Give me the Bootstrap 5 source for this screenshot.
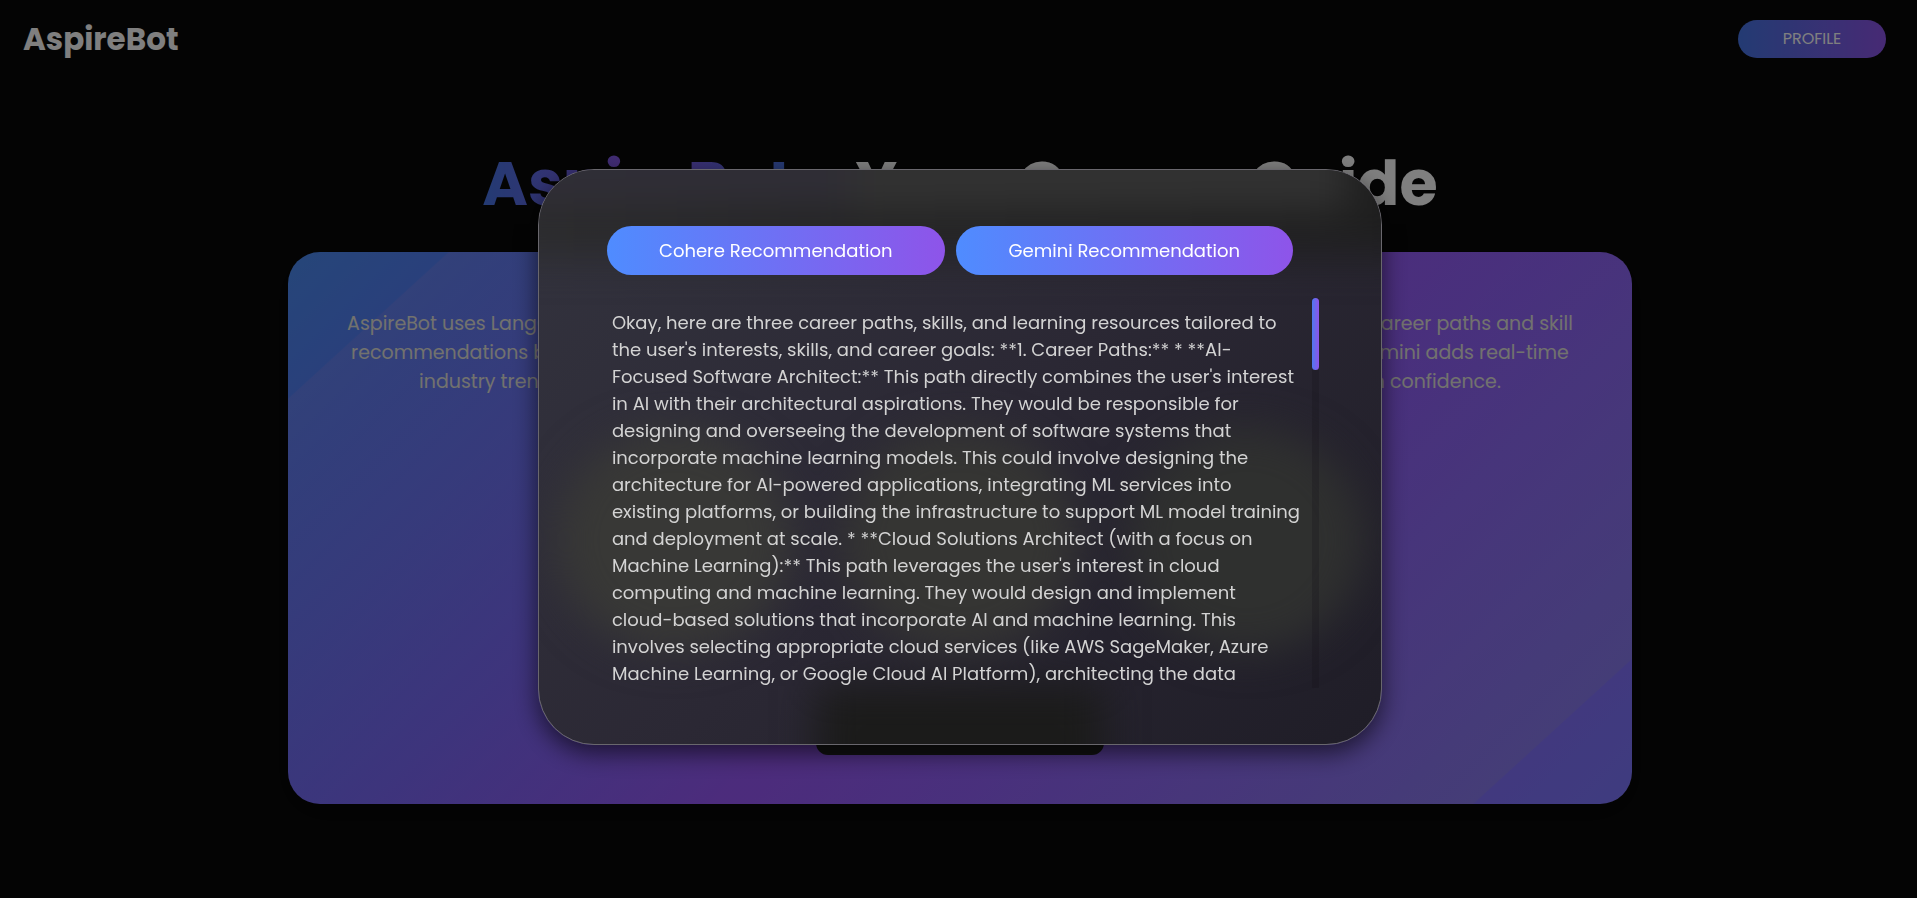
<!DOCTYPE html>
<html lang="en">
<head>
<meta charset="utf-8">
<meta name="viewport" content="width=device-width, initial-scale=1">
<title>AspireBot</title>
<link href="https://cdn.jsdelivr.net/npm/bootstrap@5.3.0/dist/css/bootstrap.min.css" rel="stylesheet">
<style>
  body { background: #090909; color: #fff; font-family: Poppins, Inter, sans-serif; min-height: 100vh; overflow: hidden; }
  .brand { font-size: 31px; line-height: 40px; font-weight: 700; color: #fff; }
  .pill { border: 0; border-radius: 30px; color: #fff; background: linear-gradient(90deg, #4776e6, #8e54e9); }
  .pill-profile { width: 148px; height: 38px; font-size: 16px; }
  .topbar { height: 77px; padding: 0 31px 0 23px; }
  .page-main { padding-left: 3px; }
  .hero-title { margin: 60px 0 22px; font-size: 62px; line-height: 93px; font-weight: 700; }
  .hero-title span { color: transparent; background: linear-gradient(90deg, #4776e6, #8e54e9 50%, #4776e6); -webkit-background-clip: text; background-clip: text; }
  .hero { width: calc(70% + 4px); height: 552px; border-radius: 32px; padding: 57px 59px 49px; box-shadow: 0 8px 32px rgba(0,0,0,.4);
    background:
      linear-gradient(137.6deg, transparent 8.2%, rgba(190,140,220,.16) 8.3%, rgba(180,150,160,.03) 35%, rgba(180,150,160,.03) 65%, rgba(190,180,130,.12) 91.8%, transparent 91.9%),
      linear-gradient(135deg, #4c8cf2 0%, #567bfa 12%, #9856fc 52%, #7e78fe 100%); }
  .hero-copy { font-size: 19px; line-height: 29px; color: #e4e4dc; }
  .hero-copy .third { padding: 0 72px; }
  .start { width: 288px; height: 70px; border: 0; border-radius: 12px; background: #222; color: #fff; }
  .shade { background: rgba(0,0,0,.5); padding-top: 15px; padding-left: 3px; }
  .sheet { width: calc(44% + 2px); padding: 56px 62px 56px 60px; border: 1px solid #69676d; border-radius: 56px;
    background: linear-gradient(135deg, #33333e, #2b2834 50%, #1f1d27); box-shadow: 0 8px 24px rgba(0,0,0,.6); }
  .frost { inset: 0; filter: blur(20px); }
  .frost i { position: absolute; }
  .frost .sky { left: -5%; right: -5%; top: -10%; height: 25%; background: linear-gradient(90deg, #2c2c2d, #232323 50%, #1e1e1e); }
  .frost .title-a { left: -5%; width: 42%; top: -5%; height: 11%; background: #302e37; }
  .frost .title-b { left: 37%; right: 4%; top: -5%; height: 12%; background: #323232; }
  .frost .orb { top: 45%; width: 28%; height: 39%; border-radius: 50%; }
  .frost .orb-a { left: 2%; background: #383836; }
  .frost .orb-b { left: 36%; background: #353533; }
  .frost .orb-c { left: 70%; background: #2f302f; }
  .frost .slot { left: 33%; right: 33%; top: 90%; height: 25%; background: #1b1b1a; }
  .tabs { padding: 0 26px 0 8px; gap: 11px; }
  .pill-tab { height: 49px; font-size: 18px; background: linear-gradient(90deg, #4f8cff, #8e54e9); }
  .answer { margin-top: 23px; height: 390px; overflow: hidden; }
  .answer p { padding: 11px 0 0 13px; font-size: 18px; line-height: 27px; color: #d3d3d3; }
  .track { width: 7px; background: rgba(20,15,25,.25); }
  .thumb { height: 72px; border-radius: 4px; background: linear-gradient(90deg, #4f78f0, #8e54e9); }
</style>
</head>
<body>
<nav class="topbar d-flex justify-content-between align-items-center">
  <a href="#" class="brand text-decoration-none">AspireBot</a>
  <button type="button" class="pill pill-profile">PROFILE</button>
</nav>
<main class="page-main d-flex flex-column align-items-center">
  <h1 class="hero-title text-nowrap"><span>AspireBot</span> - Your Career Guide</h1>
  <section class="hero d-flex flex-column justify-content-between">
    <div class="hero-copy text-nowrap">
      <div class="d-flex justify-content-between"><span>AspireBot uses LangChain</span><span>career paths and skill</span></div>
      <div class="d-flex justify-content-between px-1"><span>recommendations based</span><span>Gemini adds real-time</span></div>
      <div class="third d-flex justify-content-between"><span>industry trends</span><span>with confidence.</span></div>
    </div>
    <button type="button" class="start align-self-center" aria-label="Get started"></button>
  </section>
</main>

<div class="shade position-fixed top-0 start-0 w-100 h-100 d-flex justify-content-center align-items-center">
  <div class="sheet position-relative overflow-hidden" role="dialog" aria-label="Recommendations">
    <div class="frost position-absolute" aria-hidden="true">
      <i class="sky"></i><i class="title-a"></i><i class="title-b"></i>
      <i class="orb orb-a"></i><i class="orb orb-b"></i><i class="orb orb-c"></i>
      <i class="slot"></i>
    </div>
    <div class="tabs d-flex position-relative">
      <button type="button" class="pill pill-tab flex-fill w-50">Cohere Recommendation</button>
      <button type="button" class="pill pill-tab flex-fill w-50">Gemini Recommendation</button>
    </div>
    <div class="answer d-flex justify-content-between position-relative">
      <p class="mb-0 text-nowrap">Okay, here are three career paths, skills, and learning resources tailored to<br>
        the user's interests, skills, and career goals: **1. Career Paths:** * **AI-<br>
        Focused Software Architect:** This path directly combines the user's interest<br>
        in AI with their architectural aspirations. They would be responsible for<br>
        designing and overseeing the development of software systems that<br>
        incorporate machine learning models. This could involve designing the<br>
        architecture for AI-powered applications, integrating ML services into<br>
        existing platforms, or building the infrastructure to support ML model training<br>
        and deployment at scale. * **Cloud Solutions Architect (with a focus on<br>
        Machine Learning):** This path leverages the user's interest in cloud<br>
        computing and machine learning. They would design and implement<br>
        cloud-based solutions that incorporate AI and machine learning. This<br>
        involves selecting appropriate cloud services (like AWS SageMaker, Azure<br>
        Machine Learning, or Google Cloud AI Platform), architecting the data</p>
      <div class="track flex-shrink-0"><div class="thumb"></div></div>
    </div>
  </div>
</div>
<script src="https://cdn.jsdelivr.net/npm/bootstrap@5.3.0/dist/js/bootstrap.bundle.min.js"></script>
</body>
</html>
